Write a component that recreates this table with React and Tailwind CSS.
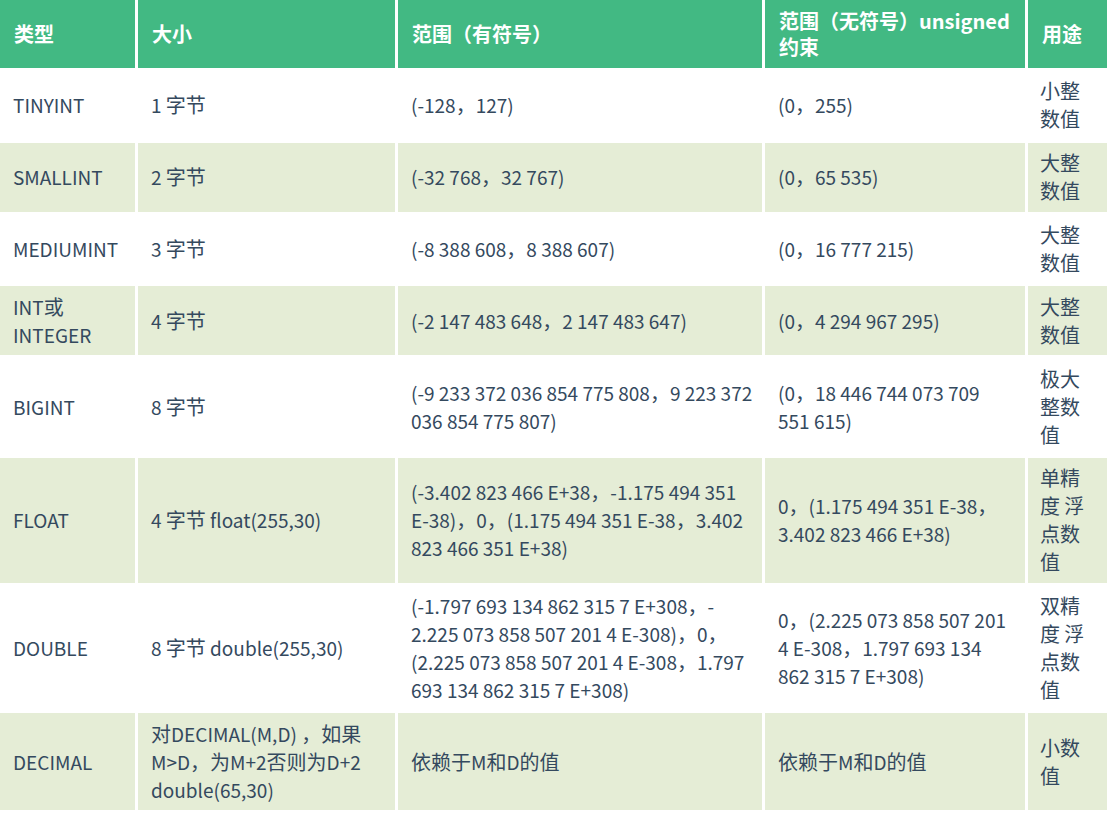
const HEAD = ["类型", "大小", "范围（有符号）", "范围（无符号）unsigned 约束", "用途"];

const ROWS = [
  ["TINYINT", "1 字节", "(-128，127)", "(0，255)", ["小整", "数值"]],
  ["SMALLINT", "2 字节", "(-32 768，32 767)", "(0，65 535)", ["大整", "数值"]],
  ["MEDIUMINT", "3 字节", "(-8 388 608，8 388 607)", "(0，16 777 215)", ["大整", "数值"]],
  [["INT或", "INTEGER"], "4 字节", "(-2 147 483 648，2 147 483 647)", "(0，4 294 967 295)", ["大整", "数值"]],
  [
    "BIGINT",
    "8 字节",
    ["(-9 233 372 036 854 775 808，9 223 372", "036 854 775 807)"],
    ["(0，18 446 744 073 709", "551 615)"],
    ["极大", "整数", "值"],
  ],
  [
    "FLOAT",
    "4 字节 float(255,30)",
    ["(-3.402 823 466 E+38，-1.175 494 351", "E-38)，0，(1.175 494 351 E-38，3.402", "823 466 351 E+38)"],
    ["0，(1.175 494 351 E-38，", "3.402 823 466 E+38)"],
    ["单精", "度 浮", "点数", "值"],
  ],
  [
    "DOUBLE",
    "8 字节 double(255,30)",
    [
      "(-1.797 693 134 862 315 7 E+308，-",
      "2.225 073 858 507 201 4 E-308)，0，",
      "(2.225 073 858 507 201 4 E-308，1.797",
      "693 134 862 315 7 E+308)",
    ],
    ["0，(2.225 073 858 507 201", "4 E-308，1.797 693 134", "862 315 7 E+308)"],
    ["双精", "度 浮", "点数", "值"],
  ],
  [
    "DECIMAL",
    ["对DECIMAL(M,D) ，如果", "M>D，为M+2否则为D+2", "double(65,30)"],
    "依赖于M和D的值",
    "依赖于M和D的值",
    ["小数", "值"],
  ],
];

// latin runs read a touch narrower than the CJK ones in the source
function Mixed({ text }) {
  return text.split(/([\u3000-\u9fff\uff00-\uffef]+)/).map((part, i) =>
    /[\u3000-\u9fff\uff00-\uffef]/.test(part) ? (
      <span key={i} className="text-[20px]">
        {part}
      </span>
    ) : (
      <span key={i}>{part}</span>
    )
  );
}

function Lines({ value }) {
  const lines = Array.isArray(value) ? value : [value];
  return lines.map((l, i) => (
    <div key={i} className="whitespace-nowrap">
      <Mixed text={l} />
    </div>
  ));
}

export default function App() {
  return (
    <div
      className="min-h-screen bg-white"
      style={{ fontFamily: '"Noto Sans CJK SC", "Noto Sans", sans-serif' }}
    >
      <div className="grid grid-cols-[135px_257px_364px_260px_79px] gap-[3px] bg-white">
        {/* header */}
        {HEAD.map((h, i) => (
          <div
            key={h}
            className={`flex items-center bg-[#42b983] py-2 pl-[14px] text-[20px] font-bold leading-[26px] text-white ${
              i === 3 ? "pr-[14px]" : "pr-2"
            }`}
          >
            {h}
          </div>
        ))}

        {/* body */}
        {ROWS.map((row, r) =>
          row.map((cell, c) => (
            <div
              key={`${r}-${c}`}
              className={`flex flex-col justify-center py-[6.4px] pr-2 text-[19px] leading-[28px] text-[#34495e] ${
                r % 2 === 1 ? "bg-[#e5edd6]" : "bg-white"
              } ${c === 4 ? "pl-3" : "pl-[13px]"}`}
            >
              <Lines value={cell} />
            </div>
          ))
        )}
      </div>
    </div>
  );
}
